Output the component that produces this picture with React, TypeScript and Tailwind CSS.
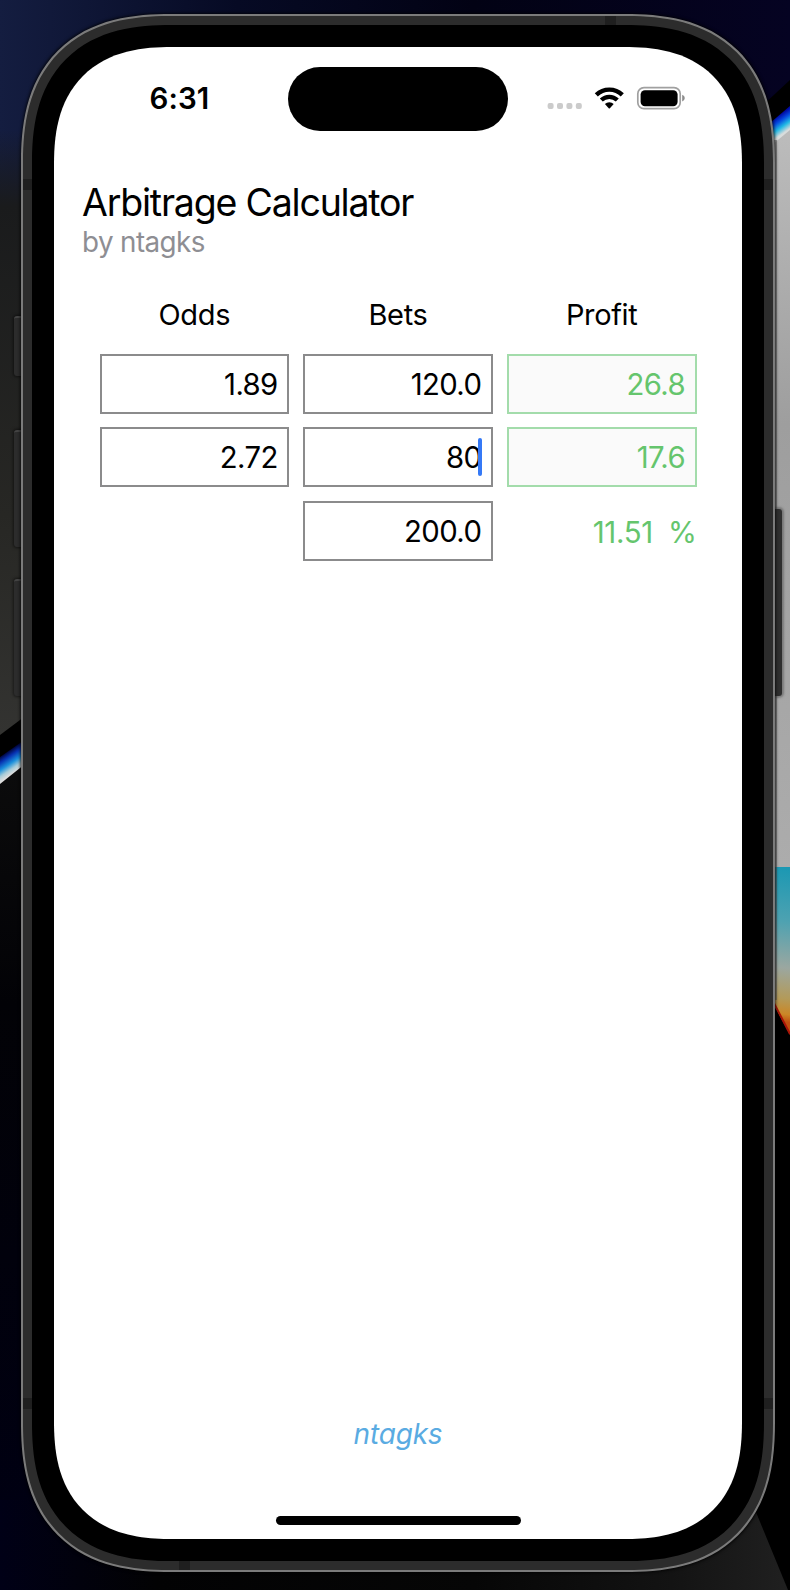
import type { ReactNode } from "react";

type FieldProps = { value: string; tone?: "plain" | "profit"; focused?: boolean };

function Field({ value, tone = "plain", focused = false }: FieldProps) {
  const profit = tone === "profit";
  return (
    <div
      className={
        profit
          ? "flex h-[60px] items-center justify-end border-2 border-[#a3dcab] bg-[#fafafa] pr-[9.5px] pt-[2px] text-[#65c56d]"
          : "flex h-[60px] items-center justify-end border-2 border-[#8b8b8c] bg-white pr-[9.5px] pt-[2px]"
      }
    >
      <span className="relative text-[29.3px] tracking-[-0.6px]">
        {value}
        {focused && (
          <span className="absolute right-[-1px] top-1/2 h-[38px] w-[4px] -translate-y-[20px] rounded-full bg-[#3579f6]" />
        )}
      </span>
    </div>
  );
}

function Wallpaper() {
  return (
    <svg className="absolute inset-0" width="790" height="1590" viewBox="0 0 790 1590">
      <defs>
        <linearGradient id="top" x1="0" x2="1" y1="0" y2="0">
          <stop offset="0" stopColor="#141d40" />
          <stop offset="0.3" stopColor="#060a24" />
          <stop offset="0.6" stopColor="#020214" />
          <stop offset="1" stopColor="#050322" />
        </linearGradient>
        <linearGradient id="leftGray" x1="0" x2="0" y1="0" y2="1">
          <stop offset="0" stopColor="#1a1a1a" stopOpacity="0" />
          <stop offset="0.12" stopColor="#1a1b1c" />
          <stop offset="0.6" stopColor="#272724" />
          <stop offset="1" stopColor="#353533" />
        </linearGradient>
        <linearGradient id="lower" x1="0" x2="0" y1="0" y2="1">
          <stop offset="0" stopColor="#0c0c0c" />
          <stop offset="0.3" stopColor="#020206" />
          <stop offset="0.9" stopColor="#000012" />
          <stop offset="1" stopColor="#000014" />
        </linearGradient>
        <linearGradient id="bottom" gradientUnits="userSpaceOnUse" x1="0" x2="790" y1="0" y2="0">
          <stop offset="0" stopColor="#000016" />
          <stop offset="0.2" stopColor="#020203" />
          <stop offset="0.6" stopColor="#060606" />
          <stop offset="0.85" stopColor="#131313" />
          <stop offset="1" stopColor="#202020" />
        </linearGradient>
        <linearGradient id="prismLeft" gradientUnits="userSpaceOnUse" x1="6" y1="752" x2="18" y2="770">
          <stop offset="0" stopColor="#000030" />
          <stop offset="0.25" stopColor="#0730b0" />
          <stop offset="0.55" stopColor="#1b90dc" />
          <stop offset="0.8" stopColor="#a8ccd8" />
          <stop offset="1" stopColor="#dddddd" />
        </linearGradient>
        <linearGradient id="prismRight" gradientUnits="userSpaceOnUse" x1="775" y1="118" x2="785" y2="132">
          <stop offset="0" stopColor="#0008a0" />
          <stop offset="0.3" stopColor="#0548e0" />
          <stop offset="0.65" stopColor="#20b8e4" />
          <stop offset="1" stopColor="#d8dcdc" />
        </linearGradient>
        <linearGradient id="rightGray" x1="0" x2="0" y1="0" y2="1">
          <stop offset="0" stopColor="#bcbcbc" />
          <stop offset="0.4" stopColor="#9e9e9e" />
          <stop offset="1" stopColor="#acacac" />
        </linearGradient>
        <linearGradient id="sunset" gradientUnits="userSpaceOnUse" x1="782" y1="867" x2="766" y2="1020">
          <stop offset="0" stopColor="#1b98b3" />
          <stop offset="0.35" stopColor="#4ea2b1" />
          <stop offset="0.65" stopColor="#9ba7a0" />
          <stop offset="0.85" stopColor="#b39a59" />
          <stop offset="0.95" stopColor="#cb8726" />
          <stop offset="1" stopColor="#c05010" />
        </linearGradient>
      </defs>
      <rect width="790" height="1590" fill="#000" />
      <rect width="790" height="300" fill="url(#top)" />
      <rect y="130" width="60" height="640" fill="url(#leftGray)" />
      <path d="M0 735L60 690V760L0 800Z" fill="#000" />
      <path d="M0 757L40 729V757L0 785Z" fill="url(#prismLeft)" />
      <path d="M0 784L40 752V1590H0Z" fill="url(#lower)" />
      <path d="M750 117L790 80V300H750Z" fill="#000" />
      <path d="M750 140L790 106V300H750Z" fill="url(#prismRight)" />
      <path d="M750 163L790 130V867H750Z" fill="url(#rightGray)" />
      <path d="M750 867H790V1035L750 960Z" fill="url(#sunset)" />
      <path d="M750 957L790 1034" stroke="#a81408" strokeWidth="2" />
      <rect x="774" y="140" width="3" height="860" fill="#555" fillOpacity="0.5" />
      <path d="M0 1500H751L788 1590H0Z" fill="url(#bottom)" />
    </svg>
  );
}

function HardwareButtons() {
  return (
    <>
      <div className="absolute left-[14px] top-[316px] h-[60px] w-[10px] rounded-l-[3px] border-t-2 border-[#444] bg-[#2c2c2c] shadow-[0_0_3px_1px_rgba(0,0,0,0.5)]" />
      <div className="absolute left-[14px] top-[430px] h-[117px] w-[10px] rounded-l-[3px] border-t-2 border-[#444] bg-[#2c2c2c] shadow-[0_0_3px_1px_rgba(0,0,0,0.5)]" />
      <div className="absolute left-[14px] top-[579px] h-[117px] w-[10px] rounded-l-[3px] border-t-2 border-[#444] bg-[#2c2c2c] shadow-[0_0_3px_1px_rgba(0,0,0,0.5)]" />
      <div className="absolute left-[770px] top-[509px] h-[187px] w-[12px] rounded-r-[3px] bg-[#2f2f2f] shadow-[0_0_2px_2px_rgba(80,80,80,0.5)]" />
    </>
  );
}

function AntennaBands() {
  return (
    <>
      <div className="absolute left-0 top-[163px] h-[11px] w-[9px] bg-[#1f1f1f]" />
      <div className="absolute right-0 top-[163px] h-[11px] w-[9px] bg-[#1f1f1f]" />
      <div className="absolute left-0 top-[1382px] h-[11px] w-[9px] bg-[#1f1f1f]" />
      <div className="absolute right-0 top-[1382px] h-[11px] w-[9px] bg-[#1f1f1f]" />
      <div className="absolute left-[582px] top-0 h-[9px] w-[11px] bg-[#1f1f1f]" />
      <div className="absolute bottom-0 left-[156px] h-[9px] w-[11px] bg-[#1f1f1f]" />
    </>
  );
}

function StatusIcons() {
  return (
    <svg className="ml-[37px] mt-[38px]" width="142" height="26" viewBox="545 85 142 26">
      <g fill="#cbcbcb">
        <rect x="547.6" y="103" width="6" height="6" rx="2" />
        <rect x="557" y="103" width="6" height="6" rx="2" />
        <rect x="566.4" y="103" width="6" height="6" rx="2" />
        <rect x="575.8" y="103" width="6" height="6" rx="2" />
      </g>
      <g fill="none" stroke="#000">
        <path d="M596.3 94.9A18.6 18.6 0 0 1 622.3 94.9" strokeWidth="4.4" />
        <path d="M601.3 100A11.6 11.6 0 0 1 617.3 100" strokeWidth="4.3" />
      </g>
      <path d="M604.9 104.1A6.3 6.3 0 0 1 613.7 104.1L609.9 108.3Q609.3 108.8 608.7 108.3Z" fill="#000" />
      <rect x="637.8" y="87.6" width="42.4" height="21" rx="6.2" fill="none" stroke="#a0a0a0" strokeWidth="1.7" />
      <rect x="640.6" y="90.2" width="37" height="16" rx="4.4" fill="#000" />
      <path d="M682.2 94.8Q684.8 95.8 684.8 98.1T682.2 101.4Z" fill="#8c8c8c" />
    </svg>
  );
}

function Heading({ children }: { children: ReactNode }) {
  return <div className="text-center tracking-[-0.35px]">{children}</div>;
}

export default function App() {
  return (
    <div className="relative h-[1590px] w-[790px] overflow-hidden bg-black font-['Inter',sans-serif] text-[29px] leading-[36px] text-black">
      <Wallpaper />
      <HardwareButtons />
      <div className="relative ml-[21px] mt-[14px] h-[1558px] w-[754px] rounded-[134px] border-2 border-[#7b7b7b] bg-[#2c2c2c] p-[9px] shadow-[0_0_3px_1px_rgba(0,0,0,0.7)] supports-[corner-shape:squircle]:rounded-[150px] supports-[corner-shape:squircle]:[corner-shape:superellipse(1.3)]">
        <AntennaBands />
        <div className="relative h-full w-full rounded-[123px] bg-black p-[22px] supports-[corner-shape:squircle]:rounded-[139px] supports-[corner-shape:squircle]:[corner-shape:superellipse(1.3)]">
          <div className="flex h-full w-full flex-col overflow-hidden rounded-[101px] bg-white supports-[corner-shape:squircle]:rounded-[118px] supports-[corner-shape:squircle]:[corner-shape:superellipse(1.3)]">
            <header className="flex h-[133px] shrink-0 items-start">
              <div className="ml-[95.5px] mt-[33px] w-[64px] whitespace-nowrap text-[29.5px] font-semibold tracking-[0.1px]">6:31</div>
              <div className="ml-[74.5px] mt-[20px] h-[64px] w-[219.5px] rounded-full bg-black" />
              <StatusIcons />
            </header>

            <div className="pl-[28px]">
              <h1 className="text-[37.5px] leading-[46px] tracking-[-1.2px]">Arbitrage Calculator</h1>
              <p className="mt-[-1px] text-[27.8px] leading-[34px] tracking-[-0.6px] text-[#8e8e93]">by ntagks</p>
            </div>

            <main className="ml-[45.5px] mt-[38px] w-[597px]">
              <div className="grid grid-cols-3 gap-x-[14px]">
                <Heading>Odds</Heading>
                <Heading>Bets</Heading>
                <Heading>Profit</Heading>
              </div>
              <div className="mt-[21px] grid grid-cols-3 gap-x-[14px] gap-y-[13.4px]">
                <Field value="1.89" />
                <Field value="120.0" />
                <Field value="26.8" tone="profit" />
                <Field value="2.72" />
                <Field value="80" focused />
                <Field value="17.6" tone="profit" />
                <div />
                <Field value="200.0" />
                <div className="flex items-center justify-end gap-[15px] pt-[4px] text-[29.4px] tracking-[-0.3px] text-[#65c56d]">
                  <span>11.51</span>
                  <span>%</span>
                </div>
              </div>
            </main>

            <footer className="mt-auto flex flex-col items-center">
              <a className="text-[28px] italic tracking-[-0.2px] text-[#5aabe2]">ntagks</a>
              <div className="mb-[14px] mt-[64px] h-[9px] w-[245px] rounded-full bg-black" />
            </footer>
          </div>
        </div>
      </div>
    </div>
  );
}
